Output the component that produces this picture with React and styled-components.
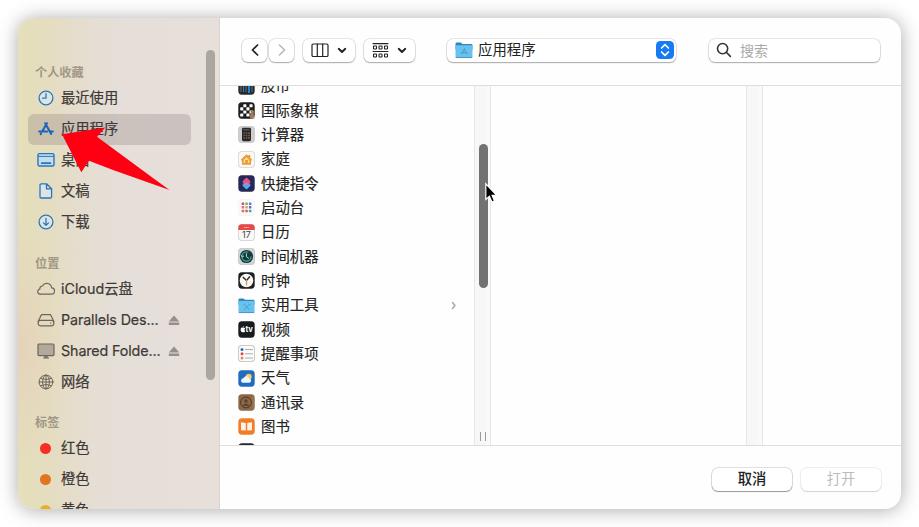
import React from "react";
import styled, { createGlobalStyle } from "styled-components";

const Global = createGlobalStyle`
  * { box-sizing: border-box; }
  body {
    margin: 0;
    background: #fff;
    overflow: hidden;
    font-family: Inter, "Noto Sans CJK SC", sans-serif;
    color: #222;
  }
  svg { display: block; flex: none; }
`;

const Stage = styled.div`
  position: relative;
  width: 919px;
  height: 527px;
  padding: 18px;
`;

const Dialog = styled.div`
  display: flex;
  width: 883px;
  height: 491px;
  border-radius: 16px;
  overflow: hidden;
  background: #fefefe;
  box-shadow: 0 1px 19px rgba(0, 0, 0, 0.34);
`;

const Sidebar = styled.aside`
  display: flex;
  width: 202px;
  padding: 44px 4px 0 10px;
  border-right: 1px solid #d9d3cf;
  background:
    radial-gradient(ellipse 45px 130px at 0 328px, rgba(229, 210, 188, 0.95), rgba(229, 210, 188, 0)),
    linear-gradient(90deg, #e5dfba 0, #e4ddc0 32px, #e5ddca 52px, #e5ded3 76px, #e6dfd9 105px, #e6dfda 100%);
`;

const Nav = styled.nav`
  display: flex;
  flex-direction: column;
  width: 163px;
`;

const Group = styled.section`
  margin-bottom: ${(p) => p.$gap}px;
`;

const GroupTitle = styled.h2`
  margin: 0;
  padding: 1px 0 0 7px;
  height: ${(p) => p.$height}px;
  font-size: 12.2px;
  line-height: 20px;
  font-weight: 700;
  color: #a09885;
`;

const NavItem = styled.div`
  display: flex;
  align-items: center;
  height: 31px;
  padding-left: 8px;
  border-radius: 6px;
  font-size: 14.3px;
  line-height: 20px;
  white-space: nowrap;
  color: #3d3938;
  background: ${(p) => (p.$selected ? "rgba(133, 116, 118, .28)" : "transparent")};
`;

const NavIcon = styled.span`
  display: flex;
  justify-content: center;
  width: 20px;
  margin-right: 5px;
  color: ${(p) => (p.$selected ? "#1a62ba" : p.$accent ? "#2a75bf" : "#6c665d")};
`;

const NavLabel = styled.span`
  flex: 1;
  padding-bottom: 1px;
  letter-spacing: ${(p) => (p.$latin ? "-0.12px" : "0")};
  -webkit-text-stroke: 0.2px currentColor;
`;

const Eject = styled.svg`
  margin-right: 11px;
  fill: #958f8b;
`;

const Dot = styled.i`
  width: 11px;
  height: 11px;
  margin-right: 1px;
  border-radius: 50%;
  background: ${(p) => p.$color};
`;

const SideScroll = styled.div`
  width: 9px;
  height: 330px;
  margin: -12px 0 0 15px;
  flex: none;
  border-radius: 5px;
  background: #aca6a0;
`;

const Main = styled.main`
  display: flex;
  flex-direction: column;
  flex: 1;
  min-width: 0;
`;

const Toolbar = styled.header`
  display: flex;
  align-items: center;
  height: 68px;
  padding: 0 20px 3px 22px;
  border-bottom: 1px solid #dedede;
`;

const Control = styled.div`
  display: flex;
  align-items: center;
  justify-content: center;
  gap: ${(p) => p.$gap || 0}px;
  width: ${(p) => p.$width}px;
  height: 23px;
  margin-right: ${(p) => p.$after || 0}px;
  border-radius: 6px;
  background: #fff;
  box-shadow: 0 0 0 0.7px rgba(0, 0, 0, 0.12), 0 1px 1.5px rgba(0, 0, 0, 0.27);
`;

const PathPopup = styled(Control)`
  justify-content: flex-start;
  padding: 0 2px 0 8px;
  font-size: 14.4px;
  line-height: 20px;
  span { flex: 1; margin-left: 5px; padding-bottom: 1px; }
`;

const Search = styled(Control)`
  justify-content: flex-start;
  padding-left: 7px;
  font-size: 14px;
  color: #a9a9a9;
`;

const Browser = styled.div`
  display: flex;
  height: 359px;
  overflow: hidden;
`;

const FileColumn = styled.div`
  width: ${(p) => p.$width}px;
  flex: none;
  overflow: hidden;
`;

const FileList = styled.div`
  margin-top: -12px;
  padding: 0 17px 0 18px;
`;

const FileRow = styled.div`
  display: flex;
  align-items: center;
  height: 24.35px;
  font-size: 14.4px;
  line-height: 20px;
  white-space: nowrap;
  -webkit-text-stroke: 0.15px currentColor;
  span { flex: 1; margin-left: 6px; }
`;

const Track = styled.div`
  display: flex;
  flex-direction: column;
  align-items: center;
  justify-content: space-between;
  width: 17px;
  flex: none;
  padding: 58px 0 4px 1px;
  border: solid #e7e7e7;
  border-width: 0 1px;
  background: linear-gradient(90deg, #f7f7f7 60%, #fbfbfb);
`;

const Thumb = styled.div`
  width: 9px;
  height: 144px;
  border-radius: 5px;
  background: #727272;
`;

const Grip = styled.div`
  width: 6px;
  height: 9px;
  margin-right: 1px;
  border: solid #999;
  border-width: 0 1px;
`;

const Footer = styled.footer`
  display: flex;
  justify-content: flex-end;
  gap: 9px;
  flex: 1;
  padding: 22px 20px 0;
  border-top: 1px solid #dedede;
`;

const Button = styled.button`
  width: 80px;
  height: 23px;
  padding: 0 0 2px;
  border: 0;
  border-radius: 6px;
  font: ${(p) => (p.disabled ? 400 : 500)} 14.3px/20px Inter, "Noto Sans CJK SC", sans-serif;
  color: ${(p) => (p.disabled ? "#bcbcbc" : "#222")};
  background: #fff;
  box-shadow: 0 0 0 0.8px rgba(0, 0, 0, ${(p) => (p.disabled ? 0.08 : 0.16)}),
    0 1px 1px rgba(0, 0, 0, ${(p) => (p.disabled ? 0.12 : 0.32)});
`;

const Overlay = styled.svg`
  position: absolute;
  left: ${(p) => p.$x}px;
  top: ${(p) => p.$y}px;
`;

const Line = ({ w = 18, h = 18, sw = 1.3, children }) => (
  <svg width={w} height={h} viewBox={`0 0 ${w} ${h}`} fill="none" stroke="currentColor" strokeWidth={sw} strokeLinecap="round" strokeLinejoin="round">
    {children}
  </svg>
);

const navIcons = {
  clock: <Line><circle cx="9" cy="9" r="6.9" fill="#dce5e3" /><path d="M9 4.7V9.2H5.6" /></Line>,
  apps: (
    <Line sw={2}>
      <path d="M9.9 3.2 5.2 11.4M8.2 3.2 14.2 14M2.2 11.4h8.1M13 11.4h2.8M3.7 14.2l.4-.7" />
    </Line>
  ),
  desktop: <Line sw={1.4}><rect x="1" y="2.6" width="16" height="12.4" rx="1.5" fill="#c5dcea" /><path d="M1.4 5.4h15.2" strokeWidth="1" /><path d="M4.7 12.2h8.8" strokeWidth="1.7" /></Line>,
  document: <Line><path fill="#dce5e3" d="M4.2 1.8H9.6L14.6 6.7V14.8a1.2 1.2 0 0 1-1.2 1.2H4.2a1.2 1.2 0 0 1-1.2-1.2V3A1.2 1.2 0 0 1 4.2 1.8ZM9.5 2v4.9h4.8" /></Line>,
  download: <Line><circle cx="9" cy="9" r="6.9" fill="#dce5e3" /><path d="M9 5.3v7M6.5 9.9 9 12.4 11.5 9.9" /></Line>,
  cloud: <Line sw={1.2}><path d="M4 14.2h10.2a3.2 3.2 0 0 0 .4-6.4A4.9 4.9 0 0 0 5.4 6 2.9 2.9 0 0 0 2.8 9.1 2.6 2.6 0 0 0 4 14.2Z" /></Line>,
  drive: <Line sw={1.2}><path d="M1.2 10.6 4 4.4Q4.3 3.7 5.2 3.7h7.6q.9 0 1.2.7l2.8 6.2" /><rect x="1.2" y="9.4" width="15.6" height="5.4" rx="2.2" /><path d="M13.6 12.1h.3" /></Line>,
  display: <Line sw={1.2}><rect x="1" y="2" width="16" height="11.6" rx="1" fill="#b3a99a" /><path d="M6.5 16h5M8 14h2v1.8H8z" /></Line>,
  globe: <Line sw={1}><circle cx="9" cy="9" r="6.9" /><ellipse cx="9" cy="9" rx="3.4" ry="6.9" /><path d="M9 2.1v13.8M2.1 9h13.8M3.4 5.4q5.6 2.4 11.2 0M3.4 12.6q5.6-2.4 11.2 0" /></Line>,
};

const groups = [
  {
    title: "个人收藏", height: 20.5, gap: 15.5, accent: true,
    items: [
      { icon: "clock", label: "最近使用" },
      { icon: "apps", label: "应用程序", selected: true },
      { icon: "desktop", label: "桌面" },
      { icon: "document", label: "文稿" },
      { icon: "download", label: "下载" },
    ],
  },
  {
    title: "位置", height: 20.5, gap: 14.5,
    items: [
      { icon: "cloud", label: "iCloud云盘" },
      { icon: "drive", label: "Parallels Des...", eject: true, latin: true },
      { icon: "display", label: "Shared Folde...", eject: true, latin: true },
      { icon: "globe", label: "网络" },
    ],
  },
  {
    title: "标签", height: 20.5, gap: 0,
    items: [
      { color: "#f92e23", label: "红色" },
      { color: "#e37420", label: "橙色" },
      { color: "#e8ae25", label: "黄色" },
    ],
  },
];

const Folder = ({ children }) => (
  <>
    <path d="M.5 2.6q0-1.1 1.1-1.1h4l1.4 1.3h8.3q1.2 0 1.2 1.2v4H.5Z" fill="#3388b3" />
    <rect x=".5" y="4" width="16" height="12" rx="1" fill="#68c1ef" />
    <path d="M.8 15.6h15.4" stroke="#398fb9" strokeWidth=".8" />
    <g stroke="#48a3d2" strokeWidth="1" fill="none">{children}</g>
  </>
);

const Tile = ({ fill, stroke = "none" }) => <rect x=".3" y=".3" width="16.4" height="16.4" rx="3.6" fill={fill} stroke={stroke} strokeWidth=".6" />;

const launchColors = ["#e34b4b", "#63bd65", "#4c83d6", "#d36bb5", "#e7a33e", "#7166ca", "#ce7845", "#e35b5b", "#48a8a0"];

const appIcons = {
  stocks: <><Tile fill="#252b31" /><path d="M3 5v9M5.5 4v10M8 6v8M14 4v10" stroke="#63717a" /><path d="M11 2v13" stroke="#1594e8" strokeWidth="1.8" /></>,
  chess: (
    <>
      <Tile fill="#1e1d1d" />
      {[0, 1, 2, 3].map((r) => [0, 1, 2, 3].map((c) => (r + c) % 2 ? <rect key={`${r}${c}`} x={2.2 + c * 3.1} y={2.2 + r * 3.1} width="3.1" height="3.1" rx=".6" fill="#fff" /> : null))}
      <path d="M12 16.5v-3l1-2-.5-2 2-2 1.6 2-.5 2 1 5Z" fill="#a77b50" />
    </>
  ),
  calculator: <><Tile fill="#cfcfd0" stroke="#bbb" /><rect x="4" y="1.8" width="9" height="13.4" rx="1.4" fill="#282828" /><path d="M5.2 3.8h6.4" stroke="#666" /><path d="M5.4 7h4M5.4 9.5h4M5.4 12h4" stroke="#666" strokeWidth="1.3" strokeDasharray="1.4 1" /><path d="M11 6.5v6.5" stroke="#bf632d" strokeWidth="1.4" strokeDasharray="1.4 1" /></>,
  home: <><Tile fill="#f9f8f6" stroke="#c2bfba" /><path d="M3 8.5 8.5 3.2l2 1.8V4h1.8v2.8L14 8.5v1h-1v4.3H4V9.5H3Z" fill="#ee9c2d" /><path d="m5.7 8.9 2.8-2.6 2.8 2.6v3.2H5.7Z" fill="#fbdca6" /><path d="M7.3 9h2.4v3.1H7.3Z" fill="#e98d2b" /></>,
  shortcuts: <><Tile fill="#25285a" /><rect x="5.2" y="6.8" width="6.6" height="6.6" rx="1.7" fill="#41b4df" transform="rotate(45 8.5 10.1)" /><rect x="5.2" y="3.6" width="6.6" height="6.6" rx="1.7" fill="#ea4d80" transform="rotate(45 8.5 6.9)" /><path d="m5.5 9 3-1.8 3 1.8-3 1.9Z" fill="#a58bd8" /></>,
  launchpad: <><Tile fill="#fafafa" stroke="#efeff2" />{launchColors.map((c, i) => <rect key={c} x={3.7 + (i % 3) * 3.6} y={3.5 + Math.floor(i / 3) * 3.6} width="2.5" height="2.5" rx=".5" fill={c} />)}</>,
  calendar: <><Tile fill="#f8f8f8" stroke="#b9b5b5" /><path d="M.3 6V3.8Q.3.3 3.8.3h9.4q3.5 0 3.5 3.5V6Z" fill="#e64b47" /><path d="M6 3.5h5" stroke="#f4a3a0" /><text x="8.5" y="14.2" textAnchor="middle" fontSize="9" fontFamily="Inter" fill="#444">17</text></>,
  timemachine: <><Tile fill="#d1d5d6" stroke="#b6b6b6" /><circle cx="8.5" cy="8.5" r="6.6" fill="#153a3a" /><circle cx="8.5" cy="8.5" r="4.6" fill="none" stroke="#43a299" strokeWidth="1.2" strokeDasharray="23 5" /><path d="M8.4 5.3v3.4l2.5 1.7M3 7l1.3 2L6 7.8" stroke="#b3ddd7" fill="none" /></>,
  clock: <><Tile fill="#202020" /><circle cx="8.5" cy="8.5" r="6.8" fill="#f9f9f7" /><path d="m4.8 5 3.7 3.5 3.4-4" fill="none" stroke="#292929" strokeWidth="1.4" /><path d="M8.5 7.5v6" stroke="#e69135" strokeWidth="1.2" /></>,
  utilities: <Folder><path d="m6 7 5.5 6M11.5 7 6 13M5.5 8.3 7 6.8M10.6 6.5l1.8 1.8" /></Folder>,
  applications: <Folder><path d="m6 12.5 2.8-5 2.8 5M5.6 11h6.2" /></Folder>,
  tv: <><Tile fill="#171b1e" /><path d="M5.1 6.8c-1-.6-2.5-.1-2.5 1.7 0 1.6 1.1 3.1 1.9 2.8.5-.2.7-.2 1.2 0 .6.2 1.1-.5 1.5-1.4-1.1-.6-.9-1.9.1-2.4-.5-.8-1.3-.9-2.2-.7ZM5 6.4c0-.9.5-1.4 1.2-1.5 0 .9-.5 1.4-1.2 1.5Z" fill="#fff" /><text x="7.4" y="11.3" fontFamily="Inter" fontWeight="700" fontSize="7.6" fill="#fff">tv</text></>,
  reminders: <><Tile fill="#fbfbfb" stroke="#999" /><circle cx="4" cy="4.5" r="1.5" fill="#356eb9" /><circle cx="4" cy="8.8" r="1.5" fill="#d94c49" /><circle cx="4" cy="13" r="1.5" fill="#e0914b" /><path d="M7 4.5h8M7 8.8h8M7 13h8" stroke="#999" strokeWidth=".8" /></>,
  weather: <><Tile fill="#1f6cc0" /><circle cx="10.7" cy="6.7" r="3" fill="#f6cf59" /><path d="M4.7 12.7h6.7a2.2 2.2 0 0 0 0-4.3 3.2 3.2 0 0 0-6-.2 2.3 2.3 0 0 0-.7 4.5Z" fill="#eef5fb" /></>,
  contacts: <><Tile fill="#8c6846" /><path d="M15 2v13" stroke="#a27c4e" /><circle cx="8" cy="8.5" r="5.4" fill="none" stroke="#4b3625" strokeWidth="1" /><circle cx="8" cy="7" r="1.8" fill="#5e4430" /><path d="M4.6 12q.6-2.6 3.4-2.6t3.4 2.6Z" fill="#5e4430" /></>,
  books: <><Tile fill="#f17e27" /><path d="m3 4.3 4.8.7v7.6L3 12.3ZM9.2 5l4.8-.7v8l-4.8.3Z" fill="#fff1e5" /></>,
  dark: <Tile fill="#25252a" />,
};

const AppIcon = ({ name, size = 17 }) => <svg width={size} height={size} viewBox="0 0 17 17">{appIcons[name]}</svg>;

const files = [
  ["stocks", "股市"], ["chess", "国际象棋"], ["calculator", "计算器"], ["home", "家庭"],
  ["shortcuts", "快捷指令"], ["launchpad", "启动台"], ["calendar", "日历"], ["timemachine", "时间机器"],
  ["clock", "时钟"], ["utilities", "实用工具", true], ["tv", "视频"], ["reminders", "提醒事项"],
  ["weather", "天气"], ["contacts", "通讯录"], ["books", "图书"], ["dark", ""],
];

const ChevronDown = () => <Line w={10} h={10} sw={1.9}><path d="m1.7 3.8 3.3 3.2 3.3-3.2" /></Line>;

export default function App() {
  return (
    <>
      <Global />
      <Stage>
        <Dialog>
          <Sidebar>
            <Nav>
              {groups.map((g) => (
                <Group key={g.title} $gap={g.gap}>
                  <GroupTitle $height={g.height}>{g.title}</GroupTitle>
                  {g.items.map((item) => (
                    <NavItem key={item.label} $selected={item.selected}>
                      <NavIcon $accent={g.accent} $selected={item.selected}>
                        {item.icon ? navIcons[item.icon] : <Dot $color={item.color} />}
                      </NavIcon>
                      <NavLabel $latin={item.latin}>{item.label}</NavLabel>
                      {item.eject && <Eject width="12" height="11" viewBox="0 0 12 11"><path d="M6 .5 11.3 6.5H.7ZM.8 7.5h10.4v2.6H.8Z" /></Eject>}
                    </NavItem>
                  ))}
                </Group>
              ))}
            </Nav>
            <SideScroll />
          </Sidebar>
          <Main>
            <Toolbar>
              <Control $width={25} $after={2}><Line w={10} h={14} sw={1.7}><path d="M7.6 2 2.4 7l5.2 5" /></Line></Control>
              <Control $width={25} $after={9}><Line w={10} h={14} sw={1.5}><path stroke="#b5b5b5" d="m2.4 2 5.2 5-5.2 5" /></Line></Control>
              <Control $width={52} $gap={8} $after={9}>
                <Line w={18} h={15} sw={1.2}><rect x="1" y="1" width="16" height="12.5" rx="1.3" /><path d="M6.3 1v12.5M11.7 1v12.5" /></Line>
                <ChevronDown />
              </Control>
              <Control $width={51} $gap={8} $after={32}>
                <Line w={17} h={17} sw={1.1}>
                  <path d="M1 1.6h15M1 9.5h15" />
                  {[4, 12].map((y) => [1.5, 7, 12.5].map((x) => <rect key={`${x}-${y}`} x={x} y={y} width="3" height="3" rx=".5" />))}
                </Line>
                <ChevronDown />
              </Control>
              <PathPopup $width={229} $after={33}>
                <AppIcon name="applications" size={18} />
                <span>应用程序</span>
                <svg width="18" height="18" viewBox="0 0 18 18">
                  <rect width="18" height="18" rx="4.4" fill="#167af3" />
                  <path d="m5.6 7 3.4-3.3L12.4 7M5.6 11 9 14.3l3.4-3.3" fill="none" stroke="#fff" strokeWidth="1.7" strokeLinecap="round" strokeLinejoin="round" />
                </svg>
              </PathPopup>
              <Search $width={171} $gap={8}>
                <Line w={16} h={16} sw={1.6}><g stroke="#333"><circle cx="6.6" cy="6.6" r="5.1" /><path d="m10.5 10.5 3.9 3.9" /></g></Line>
                搜索
              </Search>
            </Toolbar>
            <Browser>
              <FileColumn $width={254}>
                <FileList>
                  {files.map(([icon, label, nested]) => (
                    <FileRow key={icon}>
                      <AppIcon name={icon} />
                      <span>{label}</span>
                      {nested && <Line w={6} h={10} sw={1.3}><path stroke="#a2a2a2" d="M1.5 2.5 4 5.5 1.5 8.5" /></Line>}
                    </FileRow>
                  ))}
                </FileList>
              </FileColumn>
              <Track><Thumb /><Grip /></Track>
              <FileColumn $width={255} />
              <Track />
            </Browser>
            <Footer>
              <Button>取消</Button>
              <Button disabled>打开</Button>
            </Footer>
          </Main>
        </Dialog>
        <Overlay $x={62} $y={127} width="108" height="64" viewBox="0 0 108 64">
          <path d="M0 7.3 43.3.4 35 9.8 93 52.5 107.5 63 51 43 27 33.8 19.3 45.3Z" fill="#ff0013" />
        </Overlay>
        <Overlay $x={484} $y={182} width="14" height="22" viewBox="0 0 14 22">
          <path d="M1.8 1.8v15.7l3.6-3.2 2.5 5.7 2.6-1.1-2.4-5.5h4.6Z" fill="#000" stroke="#fff" strokeWidth="1.2" />
        </Overlay>
      </Stage>
    </>
  );
}
